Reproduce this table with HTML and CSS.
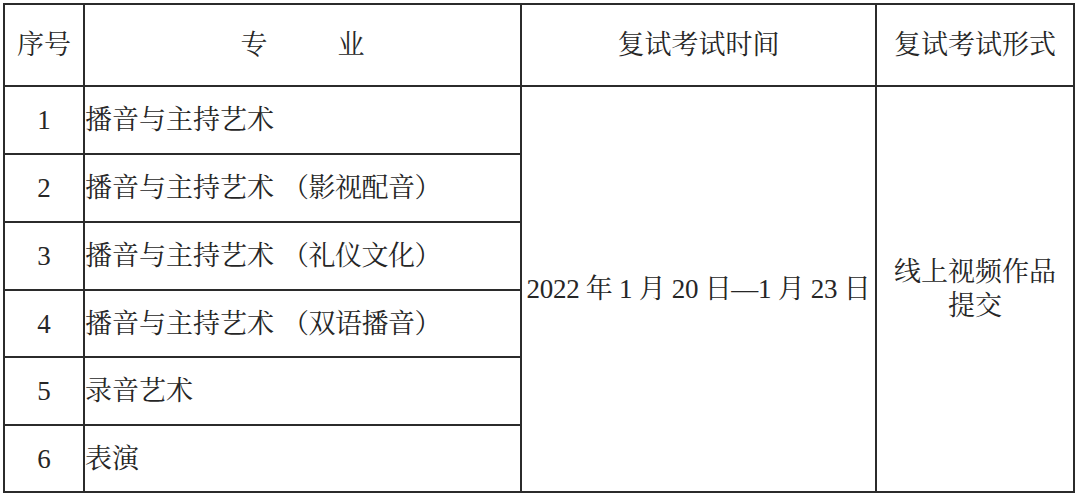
FILE: index.html
```html
<!DOCTYPE html>
<html lang="zh-CN">
<head>
<meta charset="utf-8">
<title>复试安排</title>
<link rel="stylesheet" href="styles.css">
</head>
<body>
<table class="sched">
  <colgroup>
    <col class="c-no">
    <col class="c-major">
    <col class="c-time">
    <col class="c-form">
  </colgroup>
  <thead>
    <tr class="head">
      <th>序号</th>
      <th>专<span class="gap"></span>业</th>
      <th>复试考试时间</th>
      <th>复试考试形式</th>
    </tr>
  </thead>
  <tbody>
    <tr class="r68">
      <td class="no">1</td>
      <td class="major">播音与主持艺术</td>
      <td class="time" rowspan="6">2022 年 1 月 20 日—1 月 23 日</td>
      <td class="form" rowspan="6">线上视频作品<br>提交</td>
    </tr>
    <tr class="r68">
      <td class="no">2</td>
      <td class="major">播音与主持艺术<span class="paren">（影视配音）</span></td>
    </tr>
    <tr class="r68">
      <td class="no">3</td>
      <td class="major">播音与主持艺术<span class="paren">（礼仪文化）</span></td>
    </tr>
    <tr class="r67">
      <td class="no">4</td>
      <td class="major">播音与主持艺术<span class="paren">（双语播音）</span></td>
    </tr>
    <tr class="r68">
      <td class="no">5</td>
      <td class="major">录音艺术</td>
    </tr>
    <tr class="r67">
      <td class="no">6</td>
      <td class="major">表演</td>
    </tr>
  </tbody>
</table>
</body>
</html>
```
FILE: styles.css
```css
html, body {
  margin: 0;
  padding: 0;
  background: #ffffff;
}

body {
  padding: 3px 0 0 3px;
  font-family: "Liberation Serif", "Noto Serif CJK SC", "Noto Sans CJK SC", serif;
  color: #262626;
  font-size: 27px;
}

.sched {
  border-collapse: collapse;
  table-layout: fixed;
  width: 1070px;
}

.c-no { width: 80px; }
.c-major { width: 437px; }
.c-time { width: 355px; }
.c-form { width: 198px; }

.sched th,
.sched td {
  border: 2px solid #2b2b2b;
  padding: 0;
  font-weight: normal;
  vertical-align: middle;
  line-height: 34px;
}

.head { height: 82px; }
.head th { text-align: center; }
.r68 { height: 68px; }
.r67 { height: 67px; }

.gap {
  display: inline-block;
  width: 70px;
}

.no { text-align: center; }

.major {
  text-align: left;
  padding-left: 2px;
  white-space: nowrap;
}

.paren {
  margin-left: 8px;
  letter-spacing: -0.5px;
}

.time {
  text-align: center;
  white-space: nowrap;
  letter-spacing: -0.3px;
}

.form {
  text-align: center;
}
```
